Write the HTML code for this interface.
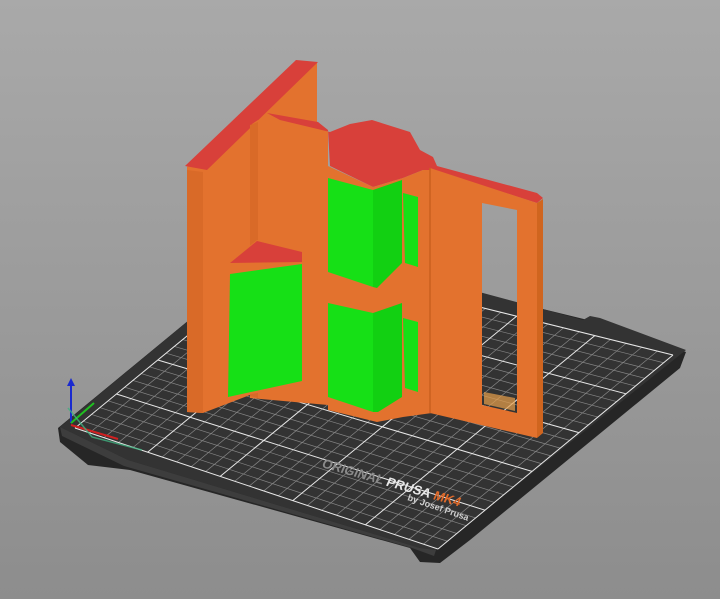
<!DOCTYPE html>
<html><head><meta charset="utf-8"><style>
html,body{margin:0;padding:0;}
body{width:720px;height:599px;overflow:hidden;background:linear-gradient(#a9a9a9,#8d8d8d);}
svg{display:block}
</style></head><body>
<svg id="s" width="720" height="599" viewBox="0 0 720 599" xmlns="http://www.w3.org/2000/svg">
<!-- bed thickness -->
<polygon points="58,428 60,442 88,465 130,470 410,548 420,562 440,563 470,540 680,368 686,352 596,322 280,245" fill="#262626"/>
<!-- bed top -->
<polygon points="60,427 280,245 483,293 583,320 590,316 600,318 686,350 436,550 420,548 128,460" fill="#333333"/>
<polygon points="60,427 128,460 420,548 436,550 434,556 412,548 124,466 62,436" fill="#3d3d3d"/>
<g id="grid" stroke="#9a9a9a" stroke-width="0.7" opacity="0.8"></g>
<g id="grid2" stroke="#e8e8e8" stroke-width="1"></g>
<text x="0" y="0" transform="translate(321,467) rotate(16) skewX(-8)" font-family="Liberation Sans, sans-serif" font-size="13" font-weight="bold" fill="#8a8a8a">ORIGINAL <tspan fill="#e8e8e8">PRUSA</tspan> <tspan fill="#e06a2a">MK4</tspan></text>
<text x="0" y="0" transform="translate(407,500) rotate(19)" font-family="Liberation Sans, sans-serif" font-size="9" font-weight="bold" fill="#cfcfcf">by Josef Prusa</text>

<!-- left tall wall -->
<polygon points="187,167 298,62 317,63 317,130 252,140 250,395 203,413 187,412" fill="#e3722e"/>
<polygon points="187,170 203,172 203,413 187,412" fill="#d96a28"/>
<polygon points="185,166 296,60 318,62 207,170" fill="#d8403a"/>
<!-- center panel -->
<polygon points="252,124 258,120 318,122 328,132 328,405 250,398" fill="#e3722e"/>
<polygon points="250,125 258,122 258,398 250,396" fill="#d96a28"/>
<!-- left small box -->
<polygon points="228,263 257,240 303,252 303,385 228,398" fill="#e3722e"/>
<polygon points="230,263 257,241 302,252 302,262" fill="#d8403a"/>
<polygon points="230,274 302,264 302,381 228,397" fill="#16e016"/>
<!-- red top of middle/right -->
<polygon points="267,113 280,120 330,132 350,124 372,120 410,132 420,150 433,157 437,166 537,193 543,198 537,203 433,170 423,170 403,178 373,187 330,166 328,130 318,122" fill="#d8403a"/>
<!-- middle block -->
<polygon points="328,166 373,187 403,178 423,170 432,170 432,413 403,417 377,422 328,410" fill="#e3722e"/>
<polygon points="328,178 373,190 373,287 328,272" fill="#16e016"/>
<polygon points="373,190 402,180 402,263 377,288 373,287" fill="#12d012"/>
<polygon points="403,193 418,197 418,267 405,263" fill="#16e016"/>
<polygon points="328,303 373,313 373,412 328,397" fill="#16e016"/>
<polygon points="373,313 402,303 402,397 378,412 373,412" fill="#12d012"/>
<polygon points="403,318 418,322 418,392 405,388" fill="#16e016"/>
<!-- right frame with hole -->
<path fill-rule="evenodd" fill="#e3722e" d="M430,168 L537,203 L537,438 L430,413 Z M482,203 L517,210 L517,413 L482,405 Z"/>
<polygon points="537,203 543,199 543,433 537,438" fill="#d0651f"/>
<line x1="430" y1="168" x2="430" y2="413" stroke="#c9601f" stroke-width="1.5"/>
<polygon points="484,392 515,398 515,411 484,404" fill="#e8a04a" opacity="0.7"/>
<!-- axes -->
<line x1="71" y1="423" x2="71" y2="384" stroke="#1a2ad0" stroke-width="2"/>
<polygon points="67,386 71,378 75,386" fill="#1a2ad0"/>
<line x1="71" y1="423" x2="94" y2="403" stroke="#20c020" stroke-width="2"/>
<line x1="71" y1="425" x2="118" y2="439" stroke="#d02020" stroke-width="2"/>
<polyline points="68,408 92,437 142,450" fill="none" stroke="#40b080" stroke-width="1.5" opacity="0.8"/>
</svg>
<script>
(function(){
var B=[282,258],R=[673,355],L=[75,428],F=[438,549];
function p(u,v){return [(1-u)*(1-v)*B[0]+u*(1-v)*R[0]+(1-u)*v*L[0]+u*v*F[0],(1-u)*(1-v)*B[1]+u*(1-v)*R[1]+(1-u)*v*L[1]+u*v*F[1]];}
var g=document.getElementById('grid'),g2=document.getElementById('grid2'),ns='http://www.w3.org/2000/svg',N=25;
for(var i=0;i<=N;i++){var t=i/N;
 [[p(t,0),p(t,1)],[p(0,t),p(1,t)]].forEach(function(s){var l=document.createElementNS(ns,'line');
 l.setAttribute('x1',s[0][0]);l.setAttribute('y1',s[0][1]);l.setAttribute('x2',s[1][0]);l.setAttribute('y2',s[1][1]);
 (i%5==0?g2:g).appendChild(l);});}
})();
</script>
</body></html>
